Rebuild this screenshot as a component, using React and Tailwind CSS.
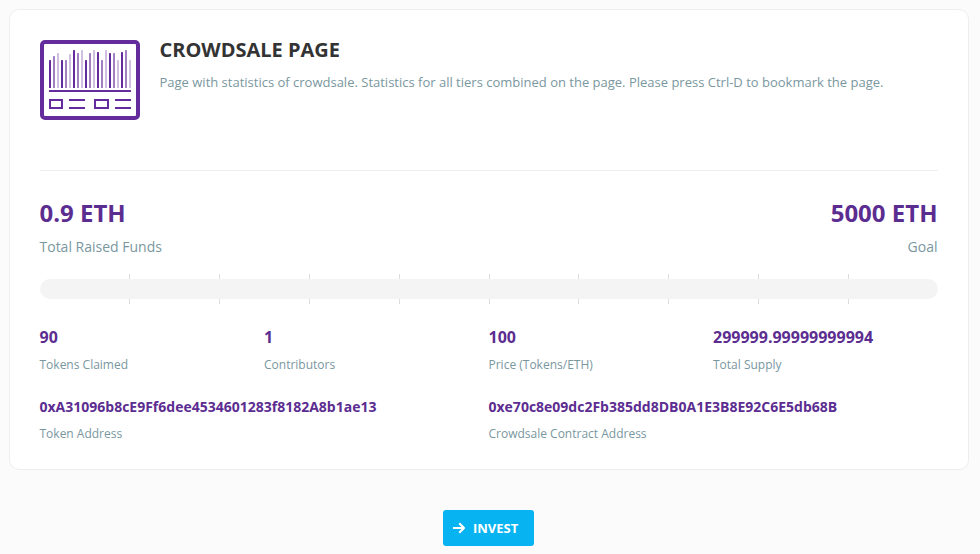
import React from "react";

const BAR_TOPS = [20, 16, 13, 20, 20, 14, 10, 13, 10, 20, 13, 10, 12, 20, 10, 13, 13, 20, 12, 10, 20];
const BAR_COLORS = ["#632b9b", "#a17fc3", "#d0bfe1"];
const TICK_GAPS = [89, 89, 89, 89, 89, 88, 89, 89, 89];

function CrowdsaleIcon() {
  return (
    <svg className="block h-20 w-[100px] shrink-0" viewBox="0 0 100 80" fill="none">
      <rect x="2" y="2" width="96" height="76" rx="3" stroke="#632b9b" strokeWidth="4" />
      {BAR_TOPS.map((top, i) => (
        <rect key={i} x={9 + i * 4} y={top} width="2" height={48 - top} rx="0.5" fill={BAR_COLORS[i % 3]} />
      ))}
      <rect x="9" y="50" width="82" height="2" rx="0.5" fill="#632b9b" />
      <g stroke="#632b9b" strokeWidth="2">
        <rect x="10" y="60" width="12" height="8" />
        <path d="M29 60h16M29 68h16" />
        <rect x="55" y="60" width="13" height="8" />
        <path d="M75 60h16M75 68h16" />
      </g>
    </svg>
  );
}

function Stat({ value, label, small }) {
  return (
    <div>
      <p className={small ? "text-sm leading-5 font-bold text-[#5c2d91]" : "text-base leading-5 font-bold text-[#5c2d91]"}>{value}</p>
      <p className={small ? "mt-[9px] text-xs leading-4 text-[#7a97a0]" : "mt-2.5 text-xs leading-4 text-[#7a97a0]"}>{label}</p>
    </div>
  );
}

export default function App() {
  return (
    <div className="h-[554px] w-[980px] overflow-hidden bg-[#fbfbfb] pt-[9px] pl-[8.5px] font-['Open_Sans',sans-serif]">
      <main className="h-[461px] w-[960px] rounded-[10px] border border-[#eeeeee] bg-white p-[30px]">
        <header className="flex h-[131px] gap-5 border-b border-[#eeeeee]">
          <CrowdsaleIcon />
          <div>
            <h1 className="text-xl leading-5 font-bold text-[#333333]">CROWDSALE PAGE</h1>
            <p className="mt-3 text-[13px] leading-5 text-[#7a97a0]">
              Page with statistics of crowdsale. Statistics for all tiers combined on the page. Please press Ctrl-D to bookmark the page.
            </p>
          </div>
        </header>

        <section className="mt-[29px] flex justify-between">
          <div>
            <p className="text-2xl leading-[26px] font-bold text-[#5c2d91]">0.9 ETH</p>
            <p className="mt-[11px] text-sm leading-5 text-[#7a97a0]">Total Raised Funds</p>
          </div>
          <div className="text-right">
            <p className="text-2xl leading-[26px] font-bold text-[#5c2d91]">5000 ETH</p>
            <p className="mt-[11px] text-sm leading-5 text-[#7a97a0]">Goal</p>
          </div>
        </section>

        <div className="mt-[17px] grid h-[30px]">
          <div className="col-start-1 row-start-1 flex">
            {TICK_GAPS.map((gap, i) => (
              <i key={i} className="box-content block border-r border-[#dddddd]" style={{ width: gap }} />
            ))}
          </div>
          <div className="z-10 col-start-1 row-start-1 my-[5px] rounded-full bg-[#f4f4f4]" />
        </div>

        <section className="mt-[23px] grid grid-cols-4">
          <Stat value="90" label="Tokens Claimed" />
          <Stat value="1" label="Contributors" />
          <Stat value="100" label="Price (Tokens/ETH)" />
          <Stat value="299999.99999999994" label="Total Supply" />
        </section>
        <section className="mt-6 grid grid-cols-2">
          <Stat small value="0xA31096b8cE9Ff6dee4534601283f8182A8b1ae13" label="Token Address" />
          <Stat small value="0xe70c8e09dc2Fb385dd8DB0A1E3B8E92C6E5db68B" label="Crowdsale Contract Address" />
        </section>
      </main>
      <div className="mt-10 flex pl-[434.5px]">
        <button className="flex h-9 w-[91px] items-center rounded-[3px] bg-[#08b3f2] pl-[10px] text-[13px] font-bold text-white">
          <svg className="mr-2 h-3 w-3" viewBox="0 0 12 12" fill="none" stroke="currentColor" strokeWidth="2">
            <path d="M0 6h11M6.2 1.2 11 6 6.2 10.8" />
          </svg>
          <span className="pt-0.5">INVEST</span>
        </button>
      </div>
    </div>
  );
}
